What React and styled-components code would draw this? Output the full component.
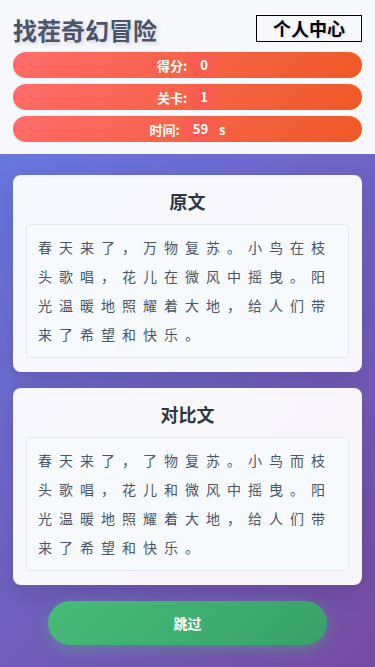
import React from "react"
import styled, { createGlobalStyle } from "styled-components"

const GlobalStyle = createGlobalStyle`
  * { box-sizing: border-box; }
  body {
    margin: 0;
    font-family: "Noto Sans CJK SC", "Noto Sans", sans-serif;
  }
`

const stats = [
  { label: "得分", value: "0" },
  { label: "关卡", value: "1" },
  { label: "时间", value: "59", unit: "s" },
]

const passages = [
  {
    title: "原文",
    text: "春天来了，万物复苏。小鸟在枝头歌唱，花儿在微风中摇曳。阳光温暖地照耀着大地，给人们带来了希望和快乐。",
  },
  {
    title: "对比文",
    text: "春天来了，了物复苏。小鸟而枝头歌唱，花儿和微风中摇曳。阳光温暖地照耀着大地，给人们带来了希望和快乐。",
  },
]

const App = () => {
  return (
    <Page>
      <GlobalStyle />
      <Header>
        <TopRow>
          <GameTitle>找茬奇幻冒险</GameTitle>
          <ProfileButton>个人中心</ProfileButton>
        </TopRow>
        {stats.map((item) => (
          <StatBar key={item.label}>
            {item.label}:
            <StatValue>{item.value}</StatValue>
            {item.unit && <Unit>{item.unit}</Unit>}
          </StatBar>
        ))}
      </Header>
      <Main>
        {passages.map((p) => (
          <Card key={p.title}>
            <CardTitle>{p.title}</CardTitle>
            <TextBox>{p.text}</TextBox>
          </Card>
        ))}
        <SkipButton>跳过</SkipButton>
      </Main>
    </Page>
  )
}

export default App

const Page = styled.div`
  min-height: 100vh;
  background: linear-gradient(135deg, #667eea 0%, #764ba2 100%);
`

const Header = styled.header`
  background: #f7f8fc;
  padding: 14px 13px 12px;
  display: flex;
  flex-direction: column;
  gap: 6px;
`

const TopRow = styled.div`
  display: flex;
  justify-content: space-between;
  align-items: center;
  height: 32px;
  margin-bottom: 0;
`

const GameTitle = styled.h1`
  margin: 0;
  font-size: 24px;
  line-height: 32px;
  font-weight: 700;
  color: #4a5568;
  text-shadow: 2px 2px 4px rgba(0, 0, 0, 0.15);
`

const ProfileButton = styled.button`
  margin-top: -3px;
  font-family: inherit;
  font-size: 18px;
  font-weight: 700;
  line-height: 23px;
  padding: 1px 16px;
  border: 1px solid #000;
  background: transparent;
  color: #000;
  text-shadow: 1px 1px 3px rgba(0, 0, 0, 0.15);
`

const StatBar = styled.div`
  height: 26px;
  border-radius: 13px;
  background: linear-gradient(135deg, #ff6b6b 0%, #ee5a24 100%);
  color: #fff;
  font-size: 13px;
  font-weight: 700;
  display: flex;
  justify-content: center;
  align-items: center;
  overflow: hidden;
`

const StatValue = styled.span`
  display: inline-block;
  margin-left: 3px;
  padding: 5px 10px;
  line-height: 18px;
  border-radius: 50%;
  background: rgba(255, 82, 100, 0.35);
`

const Unit = styled.span`
  margin-left: 1px;
`

const Main = styled.main`
  padding: 21px 13px 21px;
  display: flex;
  flex-direction: column;
  gap: 16px;
  align-items: center;
`

const Card = styled.section`
  width: 100%;
  background: rgba(255, 255, 255, 0.95);
  border-radius: 8px;
  padding: 13px 13px 14px;
  box-shadow: 0 8px 24px rgba(0, 0, 0, 0.12);
`

const CardTitle = styled.h2`
  margin: 0 0 10px;
  text-align: center;
  font-size: 18px;
  line-height: 26px;
  font-weight: 700;
  color: #2d3748;
`

const TextBox = styled.div`
  background: #f7fafc;
  border: 1px solid #e2e8f0;
  border-radius: 4px;
  padding: 8px 11px;
  font-size: 14px;
  line-height: 29px;
  letter-spacing: 7px;
  color: #4a5568;
`

const SkipButton = styled.button`
  width: 80%;
  height: 44px;
  border: none;
  border-radius: 22px;
  background: linear-gradient(135deg, #48bb78 0%, #38a169 100%);
  color: #fff;
  font-family: inherit;
  font-size: 14px;
  font-weight: 700;
  box-shadow: 0 4px 15px rgba(72, 187, 120, 0.4);
`
